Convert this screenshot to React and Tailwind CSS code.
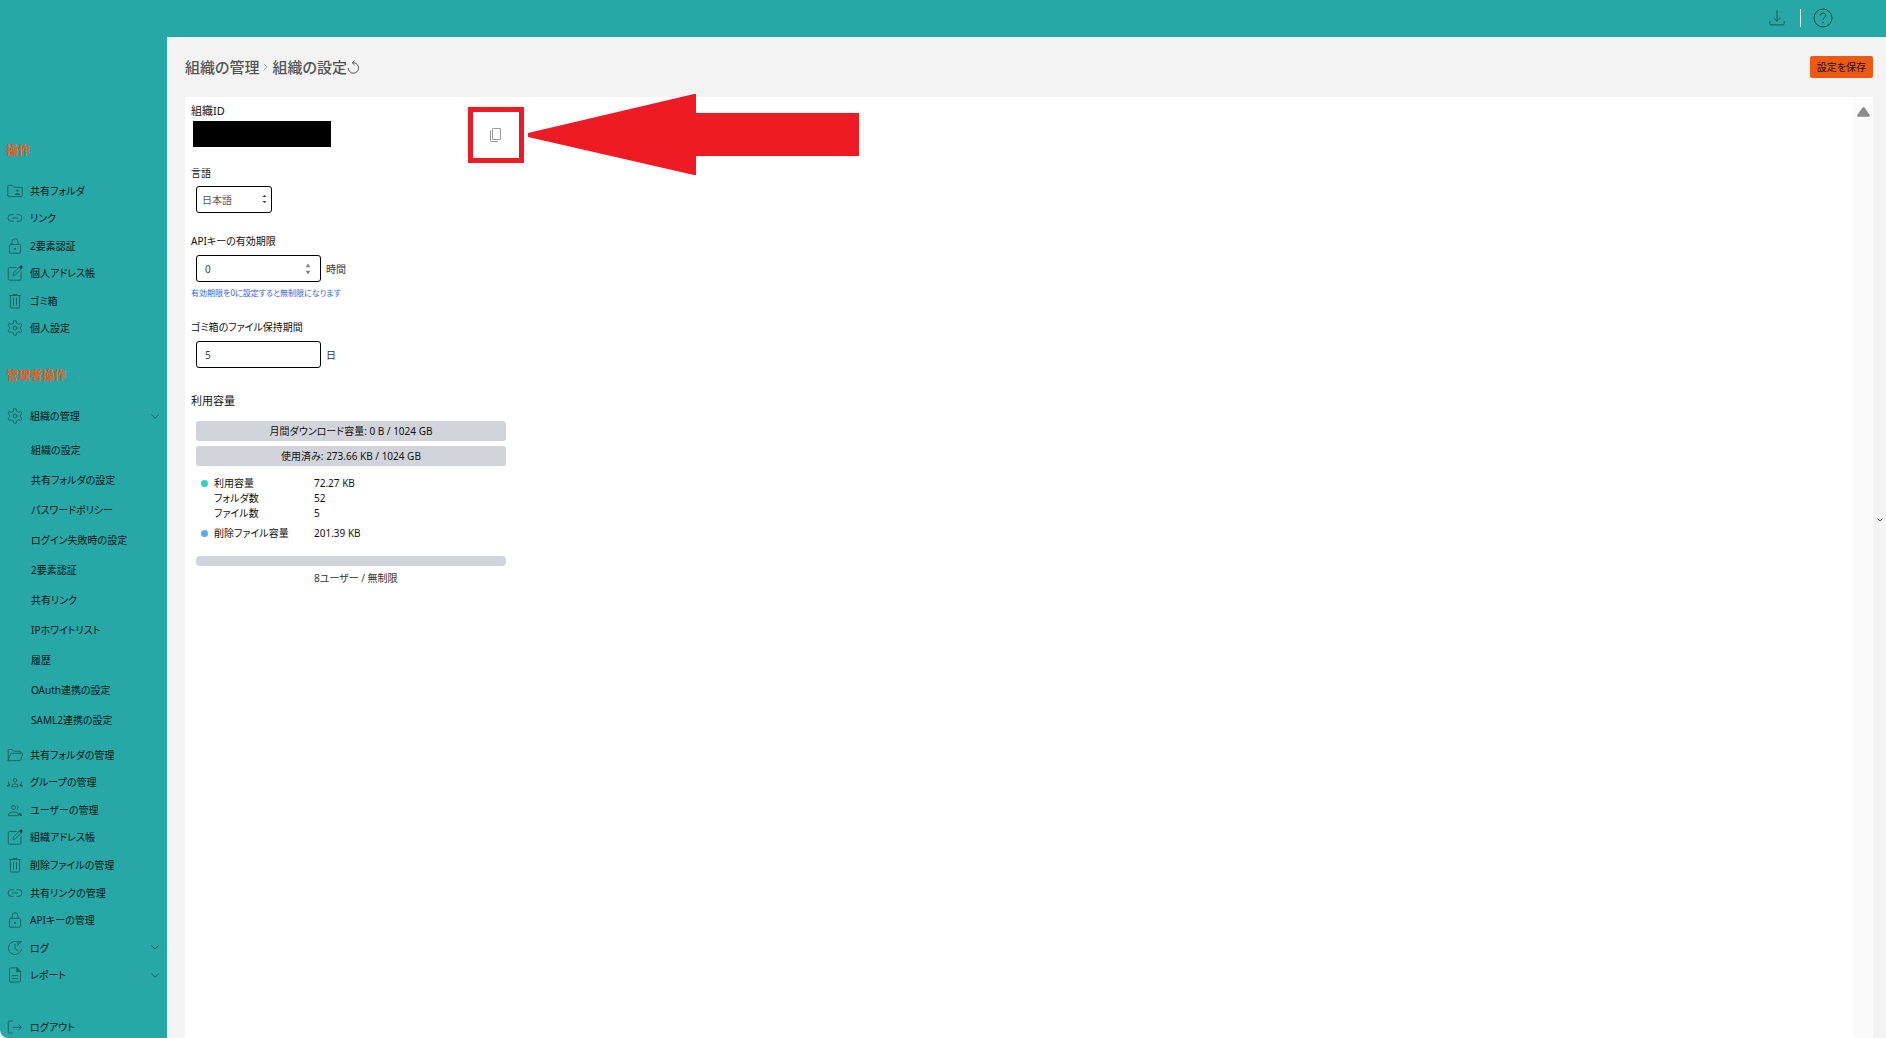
import React from "react";

const FONT = "font-['Noto_Sans','Noto_Sans_CJK_JP',sans-serif]";

function Icon({ children, className = "h-4 w-4" }) {
  return (
    <svg
      viewBox="0 0 16 16"
      className={`${className} shrink-0`}
      fill="none"
      stroke="currentColor"
      strokeWidth="0.9"
      strokeLinecap="round"
      strokeLinejoin="round"
      aria-hidden="true"
    >
      {children}
    </svg>
  );
}

const SharedFolderIcon = () => (
  <Icon>
    <path d="M.8 12.500V3.300Q.8 2.300 1.800 2.300H5.200L6.800 4.200H14.200Q15.200 4.200 15.200 5.200V12.500Q15.200 13.600 14.200 13.600H1.800Q.8 13.600.8 12.500Z" />
    <circle cx="10.500" cy="7.600" r="1.200" fill="currentColor" stroke="none" />
    <path d="M8.200 11.300Q10.500 9.300 12.800 11.300Z" fill="currentColor" />
  </Icon>
);
const LinkIcon = () => (
  <Icon>
    <path d="M6 4.600H4.400A3.400 3.400 0 0 0 4.400 11.400H6M10 4.600H11.600A3.400 3.400 0 0 1 11.600 11.400H10M5.500 8H10.500" />
  </Icon>
);
const LockIcon = () => (
  <Icon>
    <rect x="2.400" y="6.400" width="11.200" height="8.800" rx="1.200" />
    <path d="M5 6.400V4A3 3.300 0 0 1 11 4V6.400" />
    <circle cx="8" cy="10.700" r="1" fill="currentColor" stroke="none" />
  </Icon>
);
const EditIcon = () => (
  <Icon>
    <path d="M9.500 2.500H2.500Q1.300 2.500 1.300 3.700V14Q1.300 15.200 2.500 15.200H12.800Q14 15.200 14 14V7" />
    <path d="M6 10.400L6.600 7.900L12.800 1.600L14.700 3.500L8.500 9.700Z" />
    <path d="M12.900 1.900L13.800 1Q14.400.6 14.900 1.200Q15.500 1.800 15 2.500L14.300 3.300Z" fill="#3b2a2a" stroke="#3b2a2a" />
  </Icon>
);
const TrashIcon = () => (
  <Icon>
    <path d="M2.500 2.500H13.500M3.400 2.500V14Q3.400 15 4.400 15H11.600Q12.600 15 12.600 14V2.500M6.500 5.200V12.200M9.500 5.200V12.200M6 2.200V1.500H10V2.200" />
  </Icon>
);
const GearIcon = () => (
  <Icon>
    <path d="M6.800.9H9.200L9.700 3.200L11.400 4.200L13.700 3.400L15 5.600L13.200 7.100V8.900L15 10.400L13.700 12.600L11.400 11.800L9.700 12.800L9.200 15.100H6.800L6.300 12.800L4.600 11.800L2.300 12.600L1 10.400L2.800 8.900V7.100L1 5.600L2.300 3.400L4.600 4.200L6.300 3.200Z" />
    <circle cx="8" cy="8" r="1.900" />
  </Icon>
);
const OpenFolderIcon = () => (
  <Icon>
    <path d="M1.200 13.500V3.500Q1.200 2.500 2.200 2.500H5.600L7.200 4.200H12.800Q13.800 4.200 13.800 5.200V6.300M1.200 13.500L3.500 7Q3.800 6.300 4.600 6.300H14.800Q15.800 6.300 15.500 7.200L13.900 12.700Q13.600 13.500 12.800 13.500Z" />
  </Icon>
);
const GroupIcon = () => (
  <Icon>
    <circle cx="8" cy="6.300" r="1.800" />
    <path d="M4.800 12.300Q4.800 9.700 8 9.700Q11.200 9.700 11.200 12.300Z" />
    <path d="M1.600 8V9.400M.3 12H2.600V10.300Z M14.400 8V9.400M13.400 12H15.700L13.400 10.300Z" fill="currentColor" />
  </Icon>
);
const UsersIcon = () => (
  <Icon>
    <rect x="4.600" y="3.600" width="4" height="3.600" rx="1.600" />
    <path d="M1.400 13.300Q1.400 10 6.600 10Q11.700 10 11.700 13.300ZM10.300 3.600Q12.600 5.400 10.300 7.200" />
    <path d="M12.600 11.200L15 13.300H13.200Z" fill="currentColor" />
  </Icon>
);
const HistoryIcon = () => (
  <Icon>
    <path d="M9.800 1.600A6.600 6.600 0 1 0 14.500 9.300M8 4.300V8.500L11 10.700M10.800 5.200V1.600H14.300M10.800 5.200L13.800 1.900" />
  </Icon>
);
const ReportIcon = () => (
  <Icon>
    <path d="M9.800.9H3.700Q2.500.9 2.500 2.100V13.900Q2.500 15.100 3.700 15.100H12.300Q13.500 15.100 13.500 13.900V4.600M5.200 8.600H10.800M5.200 11.600H10.800" />
    <path d="M9.800.9V4.600H13.500Z" fill="currentColor" />
  </Icon>
);
const LogoutIcon = () => (
  <Icon>
    <path d="M5.500 2H2.600Q1.300 2 1.300 3.300V12.700Q1.300 14 2.600 14H5.500M6 8.300H14.300M11.700 5.700L14.300 8.300L11.700 10.900" />
  </Icon>
);
const Chevron = () => (
  <svg viewBox="0 0 8 5" className="ml-auto h-[5px] w-2 shrink-0" fill="none" stroke="#17605f" strokeWidth="1" aria-hidden="true">
    <path d="M.3.500L4 4.200L7.700.500" />
  </svg>
);

const personal = [
  ["共有フォルダ", SharedFolderIcon],
  ["リンク", LinkIcon],
  ["2要素認証", LockIcon],
  ["個人アドレス帳", EditIcon],
  ["ゴミ箱", TrashIcon],
  ["個人設定", GearIcon],
];
const submenu = [
  "組織の設定",
  "共有フォルダの設定",
  "パスワードポリシー",
  "ログイン失敗時の設定",
  "2要素認証",
  "共有リンク",
  "IPホワイトリスト",
  "履歴",
  "OAuth連携の設定",
  "SAML2連携の設定",
];
const admin = [
  ["共有フォルダの管理", OpenFolderIcon],
  ["グループの管理", GroupIcon],
  ["ユーザーの管理", UsersIcon],
  ["組織アドレス帳", EditIcon],
  ["削除ファイルの管理", TrashIcon],
  ["共有リンクの管理", LinkIcon],
  ["APIキーの管理", LockIcon],
  ["ログ", HistoryIcon, true],
  ["レポート", ReportIcon, true],
];

function NavItem({ label, Glyph, expandable }) {
  const inner = (
    <>
      <span className="text-[#17605f]">
        <Glyph />
      </span>
      <span>{label}</span>
      {expandable && <Chevron />}
    </>
  );
  const cls = "flex w-full items-center gap-[7px] pl-[7px] pr-2 text-left";
  return (
    <li className="flex items-center">
      {expandable ? (
        <button type="button" className={cls}>{inner}</button>
      ) : (
        <a href="#" className={cls}>{inner}</a>
      )}
    </li>
  );
}

function Sidebar() {
  return (
    <nav className="flex w-[167px] shrink-0 flex-col bg-[#28a7a7] pt-[104px] text-[10px] leading-4 text-[#031514]">
      <h2 className="pl-1.5 text-[12px] font-bold leading-5 text-[#f4581c]">操作</h2>
      <ul className="mt-4 grid h-[165px] shrink-0 auto-rows-fr">
        {personal.map(([label, Glyph]) => (
          <NavItem key={label} label={label} Glyph={Glyph} />
        ))}
      </ul>
      <h2 className="mt-6 pl-1.5 text-[12px] font-bold leading-5 text-[#f4581c]">管理者操作</h2>
      <ul className="mt-4 grid h-7 shrink-0">
        <NavItem label="組織の管理" Glyph={GearIcon} expandable />
      </ul>
      <ul className="mt-[5px]">
        {submenu.map((label) => (
          <li key={label}>
            <a href="#" className="flex h-[30px] items-center pl-[31px]">{label}</a>
          </li>
        ))}
      </ul>
      <ul className="mt-1.5 grid h-[248px] shrink-0 auto-rows-fr">
        {admin.map(([label, Glyph, expandable]) => (
          <NavItem key={label} label={label} Glyph={Glyph} expandable={expandable} />
        ))}
      </ul>
      <ul className="mt-6 grid h-7 shrink-0">
        <NavItem label="ログアウト" Glyph={LogoutIcon} />
      </ul>
    </nav>
  );
}

function TopBar() {
  return (
    <header className="flex h-[37px] shrink-0 items-center justify-end bg-[#28a7a7] pb-0.5 pr-[53px] text-[#14504f]">
      <button type="button" aria-label="ダウンロード">
        <Icon>
          <path d="M8 .8V11M5 8.200L8 11.200L11 8.200M.8 11.500V13.500Q.8 14.900 2.200 14.900H13.800Q15.200 14.900 15.200 13.500V11.500" />
        </Icon>
      </button>
      <span className="ml-[15px] h-[18px] w-px bg-[#d5eeee]" />
      <button type="button" aria-label="ヘルプ" className="ml-3">
        <svg viewBox="0 0 20 20" className="h-5 w-5" fill="none" stroke="currentColor" aria-hidden="true">
          <circle cx="10" cy="10" r="9" />
          <path d="M7.300 7.500Q7.500 5 10 5Q12.700 5 12.700 7.400Q12.700 8.700 11.200 9.600Q10 10.300 10 11.800" />
          <circle cx="10" cy="14.500" r="0.800" fill="currentColor" stroke="none" />
        </svg>
      </button>
    </header>
  );
}

function Spinner({ className }) {
  return (
    <svg viewBox="0 0 6 12" className={`pointer-events-none absolute ${className}`} fill="currentColor" aria-hidden="true">
      <path d="M3 .5L5.500 4.200H.5ZM3 11.500L5.500 7.800H.5Z" />
    </svg>
  );
}

function NumberField({ id, label, value, unit, hint, spinner }) {
  return (
    <div>
      <label htmlFor={id} className="block">{label}</label>
      <div className="mt-1.5 flex items-center gap-[5px] pl-[5px]">
        <div className="relative">
          <input
            id={id}
            type="text"
            inputMode="numeric"
            defaultValue={value}
            className="block h-[27px] w-[125px] rounded-[3px] border border-black bg-white px-2 text-[10px] text-[#444]"
          />
          {spinner && <Spinner className="right-2.5 top-2 h-3 w-1.5 text-[#888]" />}
        </div>
        <span className="text-[#333]">{unit}</span>
      </div>
      {hint && <p className="mt-[3px] text-[8px] text-[#3563ee]">{hint}</p>}
    </div>
  );
}

function Usage() {
  const rows = [
    ["利用容量", "72.27 KB", "bg-[#2dd4bf]"],
    ["フォルダ数", "52", ""],
    ["ファイル数", "5", ""],
    ["削除ファイル容量", "201.39 KB", "bg-[#60a5fa]"],
  ];
  return (
    <section className="mt-[25px] w-[315px] leading-[15px]">
      <h2 className="text-[11px] leading-4">利用容量</h2>
      <div className="pl-[5px]">
        <div className="mt-3 flex h-5 items-center justify-center rounded-[3px] bg-[#d1d5db]">月間ダウンロード容量: 0 B / 1024 GB</div>
        <div className="mt-[5px] flex h-5 items-center justify-center rounded-[3px] bg-[#d1d5db]">使用済み: 273.66 KB / 1024 GB</div>
        <dl className="mt-2.5 pl-[5px]">
          {rows.map(([name, value, dot], i) => (
            <div key={name} className={i === 3 ? "mt-[5px] flex items-center" : "flex items-center"}>
              <span className={`h-[7px] w-[7px] rounded-full ${dot}`} />
              <dt className="w-[106px] pl-1.5">{name}</dt>
              <dd>{value}</dd>
            </div>
          ))}
        </dl>
        <div className="mt-[15px] h-2.5 rounded-[4px] bg-[#d1d5db]" />
        <p className="mt-[5px] pl-[118px] text-[#333]">8ユーザー / 無制限</p>
      </div>
    </section>
  );
}

function Annotation() {
  return (
    <>
      <div className="pointer-events-none absolute left-[283px] top-2.5 h-14 w-14 border-[5px] border-[#ed1c24]" />
      <svg viewBox="0 0 331 82" className="pointer-events-none absolute left-[343px] top-[-3px] h-[82px] w-[331px]" fill="#ed1c24" aria-hidden="true">
        <path d="M0 39L166 0H168V19H331V62H168V81H166L0 43Z" />
      </svg>
    </>
  );
}

export default function App() {
  return (
    <div className={`flex h-screen flex-col overflow-hidden rounded-bl-lg text-[10px] leading-4 text-[#111] [font-feature-settings:'palt'] ${FONT}`}>
      <TopBar />
      <div className="flex min-h-0 flex-1">
        <Sidebar />
        <main className="flex min-w-0 flex-1 flex-col bg-[#f3f3f3] pl-[18px]">
          <div className="flex h-[60px] shrink-0 items-center justify-between pr-[13px]">
            <div className="flex items-center text-[15px] font-medium leading-6 text-[#555]">
              <a href="#">組織の管理</a>
              <svg viewBox="0 0 5 8" className="mx-1 h-2 w-[5px]" fill="none" stroke="#aaa" aria-hidden="true">
                <path d="M.8.800L4 4L.8 7.200" />
              </svg>
              <h1>組織の設定</h1>
              <button type="button" aria-label="再読み込み">
                <svg viewBox="0 0 13 14" className="h-3.5 w-[13px]" fill="none" stroke="currentColor" aria-hidden="true">
                  <path d="M5.500 2.800H7A5.200 5.200 0 1 1 1.200 8M7.600.600L5.300 2.800L7.600 5" />
                </svg>
              </button>
            </div>
            <button type="button" className="h-[22px] rounded-[2px] bg-[#ec5a16] px-[7px] text-[10px] text-[#2a0f00]">設定を保存</button>
          </div>
          <div className="flex min-h-0 flex-1">
            <div className="relative flex min-w-0 flex-1 bg-white">
              <form className="min-w-0 flex-1 pl-1.5 pt-1.5" onSubmit={(e) => e.preventDefault()}>
                <h2 className="text-[11px] leading-4">組織ID</h2>
                <div className="mt-0.5 flex items-center pl-0.5">
                  <div className="h-[26px] w-[138px] bg-black" />
                  <button type="button" aria-label="コピー" className="ml-[158px] text-[#999]">
                    <svg viewBox="0 0 13 16" className="h-4 w-[13px]" fill="none" stroke="currentColor" aria-hidden="true">
                      <rect x="3.500" y="2.500" width="8" height="11" rx="0.500" />
                      <path d="M1.500 4.500V14.500Q1.500 15.500 2.500 15.500H9" />
                    </svg>
                  </button>
                </div>
                <div className="mt-[18px]">
                  <label htmlFor="language" className="block">言語</label>
                  <div className="relative ml-[5px] mt-[5px] w-[76px]">
                    <select id="language" className="block h-[27px] w-full appearance-none rounded-[3px] border border-black bg-white px-[5px] text-[10px] text-[#555]">
                      <option>日本語</option>
                    </select>
                    <svg viewBox="0 0 5 8" className="pointer-events-none absolute right-[5px] top-[9px] h-2 w-[5px]" fill="#333" aria-hidden="true">
                      <path d="M2.500 0L4.500 2H.5ZM2.500 8L4.500 6H.5Z" />
                    </svg>
                  </div>
                </div>
                <div className="mt-5">
                  <NumberField id="expiry" label="APIキーの有効期限" value="0" unit="時間" hint="有効期限を0に設定すると無制限になります" spinner />
                </div>
                <div className="mt-[18px]">
                  <NumberField id="retention" label="ゴミ箱のファイル保持期間" value="5" unit="日" />
                </div>
                <Usage />
              </form>
              <div className="w-[19px] shrink-0 bg-[#fbfbfb] pt-2.5">
                <svg viewBox="0 0 13 10" className="mx-auto h-2.5 w-[13px]" fill="#8b8b8b" aria-hidden="true">
                  <path d="M5.500.600Q6.500-.3 7.500.600L12.700 8Q13.200 9.800 11.800 9.800H1.200Q-.2 9.800.3 8Z" />
                </svg>
              </div>
              <Annotation />
            </div>
            <div className="flex w-[13px] shrink-0 items-center justify-center pb-[95px]">
              <svg viewBox="0 0 6 4" className="h-1 w-1.5" fill="none" stroke="#334155" aria-hidden="true">
                <path d="M.5.800L3 2.800L5.500.800" />
              </svg>
            </div>
          </div>
        </main>
      </div>
    </div>
  );
}
